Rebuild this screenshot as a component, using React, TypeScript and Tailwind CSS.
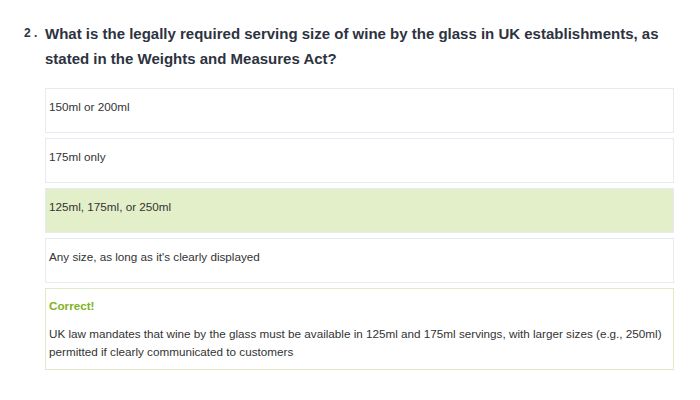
const options = [
  { id: 'a', text: '150ml or 200ml', correct: false },
  { id: 'b', text: '175ml only', correct: false },
  { id: 'c', text: '125ml, 175ml, or 250ml', correct: true },
  { id: 'd', text: "Any size, as long as it's clearly displayed", correct: false },
];

export default function App() {
  return (
    <div className="min-h-screen w-[700px] bg-white font-['Liberation_Sans',Arial,sans-serif] text-[#333]">
      <div className="pl-6 pr-[26px] pt-[21px]">
        <div className="flex items-start">
          <span className="w-[21px] shrink-0 pt-[3px] text-[12px] font-bold text-[#2d3340]">2 .</span>
          <h2 className="text-[15px] font-bold leading-[25px] text-[#2d3340]">
            What is the legally required serving size of wine by the glass in UK establishments, as
            stated in the Weights and Measures Act?
          </h2>
        </div>

        <div className="ml-[21px] mt-[17px] flex flex-col gap-[5px]">
          {options.map((o) => (
            <div
              key={o.id}
              className={`h-[45px] border border-[#e6ebf3] px-[3px] pt-[9px] text-[11.7px] leading-[18px] ${
                o.correct ? 'bg-[#e3efc9]' : 'bg-white'
              }`}
            >
              {o.text}
            </div>
          ))}

          <div className="border border-[#dfeac7] px-[3px] pb-[8px] pt-[8px] text-[11.7px] leading-[18px]">
            <p className="font-bold text-[#7fb324]">Correct!</p>
            <p className="mt-[10px]">
              UK law mandates that wine by the glass must be available in 125ml and 175ml servings, with
              larger sizes (e.g., 250ml) permitted if clearly communicated to customers
            </p>
          </div>
        </div>
      </div>
    </div>
  );
}
